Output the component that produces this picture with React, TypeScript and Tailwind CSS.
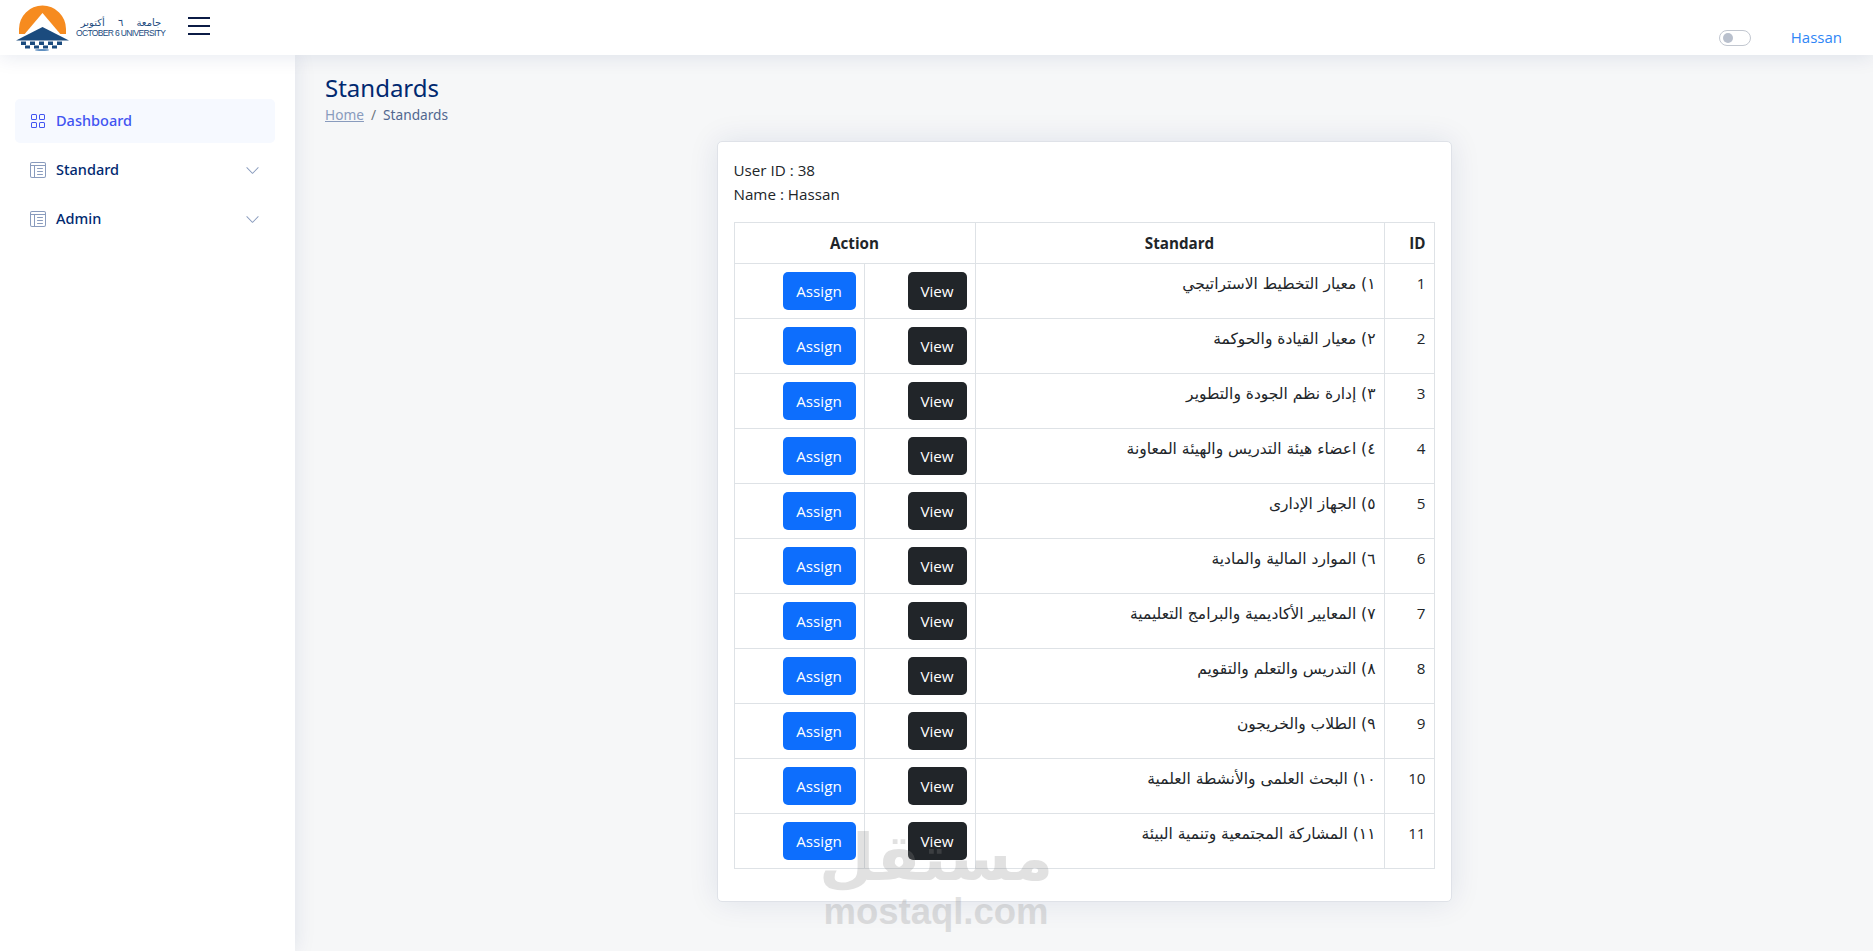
import { BsChevronDown, BsGrid, BsLayoutTextWindowReverse } from 'react-icons/bs';

const standards = [
  '١) معيار التخطيط الاستراتيجي',
  '٢) معيار القيادة والحوكمة',
  '٣) إدارة نظم الجودة والتطوير',
  '٤) اعضاء هيئة التدريس والهيئة المعاونة',
  '٥) الجهاز الإدارى',
  '٦) الموارد المالية والمادية',
  '٧) المعايير الأكاديمية والبرامج التعليمية',
  '٨) التدريس والتعلم والتقويم',
  '٩) الطلاب والخريجون',
  '١٠) البحث العلمى والأنشطة العلمية',
  '١١) المشاركة المجتمعية وتنمية البيئة',
];

function Logo() {
  return (
    <svg width="56" height="46" viewBox="0 0 56 46" className="shrink-0">
      <path d="M4 24 A23.500 23.500 0 1 1 51 24 L51 29 L4 29 Z" fill="#f68b1f" />
      <path d="M27.500 8 L8 31 L47 31 Z" fill="#fff" />
      <path d="M27.500 22 L1 35.500 L54 35.500 Z" fill="#1b4b7e" />
      {[5, 14, 23, 32, 41].map((x) => (
        <rect key={x} x={x + 1} y="36.500" width="5" height="3.500" fill="#1b4b7e" />
      ))}
      {[10, 19, 28, 37].map((x) => (
        <rect key={x} x={x} y="40.500" width="5" height="3" fill="#1b4b7e" />
      ))}
      <ellipse cx="27" cy="45" rx="7" ry="1" fill="#5f8fc0" />
    </svg>
  );
}

function SideLink({ label }: { label: string }) {
  return (
    <div className="flex h-[44px] items-center px-[15px] text-[#012970]">
      <BsLayoutTextWindowReverse className="mr-[10px] text-[16px] text-[#899bbd]" />
      <span className="flex-1">{label}</span>
      <BsChevronDown className="text-[15px] text-[#899bbd]" />
    </div>
  );
}

export default function App() {
  return (
    <div className="relative min-h-[951px] overflow-hidden bg-[#f6f7f8] font-['Open_Sans',sans-serif] text-[15.2px] text-[#212529]">
      <header className="relative z-10 flex h-[55px] items-center bg-white pl-[15px] pr-[31px] shadow-[0_2px_20px_rgba(1,41,112,0.1)]">
        <Logo />
        <div className="ml-[5px] flex w-[90px] flex-col items-start leading-none text-[#1b4b7e]">
          <span className="w-full text-center font-['DejaVu_Sans',sans-serif] text-[10px] [word-spacing:10px]" dir="rtl">
            جامعة ٦ أكتوبر
          </span>
          <span className="mt-[1px] whitespace-nowrap font-['Liberation_Sans',sans-serif] text-[8.500px] tracking-[-0.65px]">
            OCTOBER 6 UNIVERSITY
          </span>
        </div>
        <svg width="22" height="18" viewBox="0 0 22 18" className="ml-[22px] -mt-[3px]">
          <path d="M0 1H22M0 9H22M0 17H22" stroke="#0b1b45" strokeWidth="2" />
        </svg>
        <div className="ml-auto mt-[20px] flex items-center">
          <span className="flex h-[16px] w-[32px] items-center rounded-full border border-[#c2c7d0] bg-white pl-[3px]">
            <span className="h-[10px] w-[10px] rounded-full bg-[#b9c0cd]" />
          </span>
          <span className="ml-[40px] text-[15px] text-[#2f86f6]">Hassan</span>
        </div>
      </header>

      <div className="flex">
        <aside className="h-[896px] w-[295px] shrink-0 bg-white px-[15px] pt-[44px] font-['Noto_Sans',sans-serif] text-[14.500px] font-medium shadow-[0_0_20px_rgba(1,41,112,0.1)]">
          <div className="flex h-[44px] w-[260px] items-center rounded-[5px] bg-[#f6f9ff] px-[15px] text-[#4154f1]">
            <BsGrid className="mr-[10px] text-[16px]" />
            Dashboard
          </div>
          <div className="mt-[5px] flex w-[260px] flex-col gap-[5px]">
            <SideLink label="Standard" />
            <SideLink label="Admin" />
          </div>
        </aside>

        <main className="flex-1 px-[30px] pt-[18px]">
          <h1 className="font-['Noto_Sans',sans-serif] text-[24px] font-normal leading-[29px] text-[#012970]">Standards</h1>
          <nav className="mt-[2px] flex font-['Noto_Sans',sans-serif] text-[13.700px] leading-[21px] text-[#51678f]">
            <span className="text-[#899bbd] underline">Home</span>
            <span className="px-[7px] text-[#6c757d]">/</span>
            <span>Standards</span>
          </nav>

          <section className="mx-auto mt-[16px] w-[735px] rounded-[5px] border border-[#dfe2e8] bg-white p-[16px] shadow-[0_0_30px_rgba(1,41,112,0.1)]">
            <p className="leading-[24px]">User ID : 38</p>
            <p className="leading-[24px]">Name : Hassan</p>
            <table className="mt-[16px] mb-[16px] w-[700px] table-fixed border-collapse border border-[#dee2e6]">
              <colgroup>
                <col className="w-[130px]" />
                <col className="w-[111px]" />
                <col className="w-[409px]" />
                <col className="w-[50px]" />
              </colgroup>
              <thead>
                <tr className="h-[41px]">
                  <th colSpan={2} className="border border-[#dee2e6] p-[8px] font-bold">Action</th>
                  <th className="border border-[#dee2e6] p-[8px] font-bold">Standard</th>
                  <th className="border border-[#dee2e6] p-[8px] text-right font-bold">ID</th>
                </tr>
              </thead>
              <tbody>
                {standards.map((name, i) => (
                  <tr key={i} className="h-[55px]">
                    <td className="border border-[#dee2e6] p-[8px] text-right">
                      <button className="inline-block h-[38px] w-[73px] rounded-[5px] bg-[#0d6efd] text-white">Assign</button>
                    </td>
                    <td className="border border-[#dee2e6] p-[8px] text-right">
                      <button className="inline-block h-[38px] w-[59px] rounded-[5px] bg-[#212529] text-white">View</button>
                    </td>
                    <td className="border border-[#dee2e6] p-[8px] align-top" dir="rtl">
                      <span className="font-['DejaVu_Sans',sans-serif] text-[15.500px] leading-[24px]">{name}</span>
                    </td>
                    <td className="border border-[#dee2e6] p-[8px] text-right align-top">{i + 1}</td>
                  </tr>
                ))}
              </tbody>
            </table>
          </section>
        </main>
      </div>

      {/* mostaql watermark, sits on top of the card */}
      <div className="pointer-events-none absolute left-[823px] top-[824px] z-20 flex w-[226px] flex-col items-center text-[#8a8a8a] opacity-25">
        <span className="font-['DejaVu_Sans',sans-serif] text-[64px] font-bold leading-[68px]" dir="rtl">مستقل</span>
        <span className="font-['Liberation_Sans',sans-serif] text-[36.500px] font-bold leading-[40px]">mostaql.com</span>
      </div>
    </div>
  );
}
